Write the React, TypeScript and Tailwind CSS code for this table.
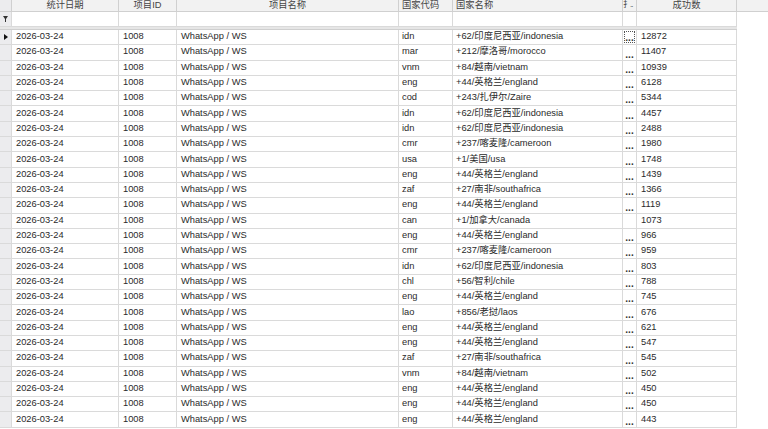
import React from 'react';

type Row = { code: string; name: string; count: number; btn?: boolean };

const rows: Row[] = [
  { code: 'idn', name: '+62/印度尼西亚/indonesia', count: 12872 },
  { code: 'mar', name: '+212/摩洛哥/morocco', count: 11407 },
  { code: 'vnm', name: '+84/越南/vietnam', count: 10939 },
  { code: 'eng', name: '+44/英格兰/england', count: 6128 },
  { code: 'cod', name: '+243/扎伊尔/Zaire', count: 5344 },
  { code: 'idn', name: '+62/印度尼西亚/indonesia', count: 4457 },
  { code: 'idn', name: '+62/印度尼西亚/indonesia', count: 2488 },
  { code: 'cmr', name: '+237/喀麦隆/cameroon', count: 1980 },
  { code: 'usa', name: '+1/美国/usa', count: 1748 },
  { code: 'eng', name: '+44/英格兰/england', count: 1439 },
  { code: 'zaf', name: '+27/南非/southafrica', count: 1366 },
  { code: 'eng', name: '+44/英格兰/england', count: 1119 },
  { code: 'can', name: '+1/加拿大/canada', count: 1073, btn: false },
  { code: 'eng', name: '+44/英格兰/england', count: 966 },
  { code: 'cmr', name: '+237/喀麦隆/cameroon', count: 959 },
  { code: 'idn', name: '+62/印度尼西亚/indonesia', count: 803 },
  { code: 'chl', name: '+56/智利/chile', count: 788 },
  { code: 'eng', name: '+44/英格兰/england', count: 745 },
  { code: 'lao', name: '+856/老挝/laos', count: 676 },
  { code: 'eng', name: '+44/英格兰/england', count: 621 },
  { code: 'eng', name: '+44/英格兰/england', count: 547 },
  { code: 'zaf', name: '+27/南非/southafrica', count: 545 },
  { code: 'vnm', name: '+84/越南/vietnam', count: 502 },
  { code: 'eng', name: '+44/英格兰/england', count: 450 },
  { code: 'eng', name: '+44/英格兰/england', count: 450 },
  { code: 'eng', name: '+44/英格兰/england', count: 443 },
];

const cols = 'grid grid-cols-[12px_107px_58px_222px_54px_170px_14px_100px]';

function Cell({ children, className = '' }: { children?: React.ReactNode; className?: string }) {
  return (
    <div className={`border-r border-b border-[#dadada] overflow-hidden whitespace-nowrap flex items-center ${className}`}>
      {children}
    </div>
  );
}

export default function App() {
  return (
    <div className="w-[768px] h-[429px] overflow-hidden bg-white text-[9.3px] text-[#2a2a2a] font-['Liberation_Sans','Noto_Sans_CJK_SC',sans-serif]">
      {/* header, scrolled so its top is cut */}
      <div className="h-[12px] bg-[#f2f2f2] border-b border-[#d0d0d0] flex">
        <div className={`${cols} text-[#444] leading-[10px]`}>
          <div className="border-r border-[#d0d0d0] bg-[#ececee]" />
          <div className="border-r border-[#d0d0d0] flex justify-center items-start">统计日期</div>
          <div className="border-r border-[#d0d0d0] flex justify-center items-start">项目ID</div>
          <div className="border-r border-[#d0d0d0] flex justify-center items-start">项目名称</div>
          <div className="border-r border-[#d0d0d0] flex items-start pl-[3px]">国家代码</div>
          <div className="border-r border-[#d0d0d0] flex items-start pl-[3px]">国家名称</div>
          <div className="border-r border-[#d0d0d0] flex items-start text-[8px] tracking-[-1px] overflow-hidden whitespace-nowrap">扌..</div>
          <div className="border-r border-[#d0d0d0] flex justify-center items-start">成功数</div>
        </div>
      </div>

      {/* filter row */}
      <div className={`${cols} h-[15px]`}>
        <Cell className="bg-[#ececee] justify-center">
          <svg width="5" height="7" viewBox="0 0 5 7">
            <polygon points="0,0 5,0 3,3 3,6 2,6 2,3" fill="#333" />
          </svg>
        </Cell>
        <Cell />
        <Cell />
        <Cell />
        <Cell />
        <Cell />
        <Cell />
        <Cell />
      </div>

      {/* separator between filter row and data */}
      <div className="w-[737px] h-[3px] bg-[#e6e6e6] border-b border-[#cfcfcf]" />

      {/* data rows */}
      {rows.map((r, i) => (
        <div key={i} className={`${cols} h-[15.3px]`}>
          <Cell className="bg-[#ececee] justify-center">
            {i === 0 && (
              <svg width="4" height="6" viewBox="0 0 4 6">
                <polygon points="0,0 4,3 0,6" fill="#111" />
              </svg>
            )}
          </Cell>
          <Cell className="pl-[4px]">2026-03-24</Cell>
          <Cell className="pl-[4px]">1008</Cell>
          <Cell className="pl-[4px]">WhatsApp / WS</Cell>
          <Cell className="pl-[3px]">{r.code}</Cell>
          <Cell className="pl-[3px]">{r.name}</Cell>
          <Cell className="justify-center p-[1px]">
            {r.btn !== false && (
              <div
                className={`w-full h-full flex items-end justify-center font-bold text-[10px] leading-[9px] text-[#333] ${
                  i === 0 ? 'border border-dotted border-[#555]' : ''
                }`}
              >
                ...
              </div>
            )}
          </Cell>
          <Cell className="pl-[4px]">{r.count}</Cell>
        </div>
      ))}
    </div>
  );
}
